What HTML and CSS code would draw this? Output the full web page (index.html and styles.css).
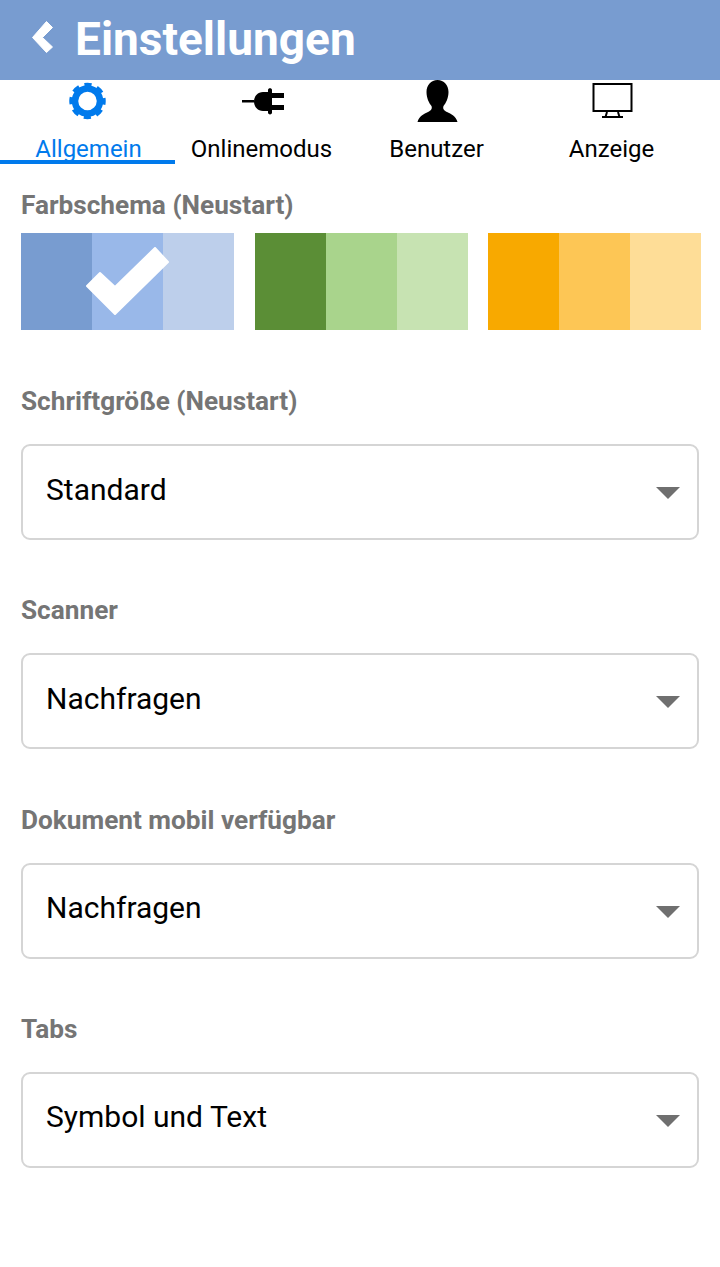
FILE: index.html
```html
<!DOCTYPE html>
<html lang="de">
  <head>
    <meta charset="UTF-8" />
    <title>Einstellungen</title>
    <link rel="stylesheet" href="styles.css">
  </head>
  <body>
    <header class="header">
      <svg class="back" viewBox="0 0 25 34" width="25" height="34">
        <path d="M2.500 17.500 L16.500 1.500 L22.500 7.500 L12.500 17.500 L22.500 27 L16.500 32.500 z" fill="#fff" stroke="#fff" stroke-width="1" stroke-linejoin="round" />
      </svg>
      <h1>Einstellungen</h1>
    </header>

    <nav class="tabs">
      <div class="tab active">
        <svg viewBox="0 0 38 38" width="38" height="38">
          <circle cx="18.500" cy="19" r="12.500" fill="none" stroke="#007aec" stroke-width="6.500" />
          <circle cx="18.500" cy="19" r="16" fill="none" stroke="#007aec" stroke-width="4.500" stroke-dasharray="7 5.566" stroke-dashoffset="3.500" />
        </svg>
        <span>Allgemein</span>
      </div>
      <div class="tab">
        <svg viewBox="0 0 42 38" width="42" height="38">
          <path d="M0 18h12v2.500H0z M12 19.500C12 14 16 10 21 10h5V8c0-2.500 4-2.500 4 0v3h12v5H30v7h12v5H30v2.500c0 2.500-4 2.500-4 0V29h-5c-5 0-9-4-9-9.500z" />
        </svg>
        <span>Onlinemodus</span>
      </div>
      <div class="tab">
        <svg viewBox="0 0 42 38" width="42" height="38">
          <path d="M20.500 -2C27 -2 31.500 3 31.500 10C31.500 16 29 21 26.500 24C25.500 27 27 28.500 30 30C34 32 39 34 40.500 40H0.500C2 34 7 32 11 30C14 28.500 15.500 27 14.500 24C12 21 9.500 16 9.500 10C9.500 3 14 -2 20.500 -2z" />
        </svg>
        <span>Benutzer</span>
      </div>
      <div class="tab">
        <svg viewBox="0 0 42 38" width="42" height="38">
          <rect x="1.500" y="2" width="38" height="27" fill="none" stroke="#000" stroke-width="2" />
          <path d="M15 30l-1.500 5M26 30l1.500 5M10 35h21" fill="none" stroke="#000" stroke-width="2" />
        </svg>
        <span>Anzeige</span>
      </div>
    </nav>

    <main class="content">
      <section class="group group-color">
        <label>Farbschema (Neustart)</label>
        <div class="schemes">
          <div class="scheme">
            <i class="blue1"></i><i class="blue2"></i><i class="blue3"></i>
            <svg class="check" viewBox="0 0 92 76" width="92" height="76">
              <path d="M6 43 L19 30 L34 44 L74 5 L87 19 L34 71 z" fill="#fff" stroke="#fff" stroke-width="2" stroke-linejoin="round" />
            </svg>
          </div>
          <div class="scheme">
            <i class="green1"></i><i class="green2"></i><i class="green3"></i>
          </div>
          <div class="scheme">
            <i class="orange1"></i><i class="orange2"></i><i class="orange3"></i>
          </div>
        </div>
      </section>

      <section class="group">
        <label>Schriftgröße (Neustart)</label>
        <div class="select">Standard</div>
      </section>

      <section class="group">
        <label>Scanner</label>
        <div class="select">Nachfragen</div>
      </section>

      <section class="group">
        <label>Dokument mobil verfügbar</label>
        <div class="select">Nachfragen</div>
      </section>

      <section class="group">
        <label>Tabs</label>
        <div class="select">Symbol und Text</div>
      </section>
    </main>
  </body>
</html>
```

FILE: styles.css
```css
body {
  margin: 0;
  font-family: Roboto, sans-serif;
  background: #fff;
  color: #000;
}

.header {
  height: 80px;
  background-color: #789cd0;
  display: flex;
  align-items: center;
  padding-left: 30px;
  color: #fff;
}

.back {
  margin-right: 20px;
  margin-top: -7px;
}

.header h1 {
  margin: 0;
  font-size: 46px;
  font-weight: 700;
  margin-top: -3px;
}

.tabs {
  display: flex;
  height: 84px;
}

.tab {
  width: 175px;
  height: 84px;
  box-sizing: border-box;
  display: flex;
  flex-direction: column;
  align-items: center;
  padding-top: 2px;
  font-size: 24px;
}

.tab svg {
  overflow: visible;
}

.tab span {
  margin-top: 15px;
  line-height: 28px;
  padding-right: 2px;
}

.tab.active {
  color: #007aec;
  border-bottom: 4px solid #007aec;
}

.tab.active span {
  padding-right: 0;
  padding-left: 2px;
}

.content {
  padding: 27px 21px 0;
}

.group {
  margin-bottom: 56.33px;
}

.group label {
  display: block;
  font-size: 26.2px;
  font-weight: 700;
  color: #757575;
  line-height: 28px;
  margin-bottom: 29px;
}

.group-color {
  margin-bottom: 57px;
}

.group-color label {
  margin-bottom: 14px;
}

.schemes {
  display: flex;
  justify-content: space-between;
  margin-right: -2px;
}

.scheme {
  position: relative;
  display: flex;
  height: 97px;
}

.scheme i {
  display: block;
  width: 71px;
}

.check {
  position: absolute;
  left: 60px;
  top: 10px;
  filter: blur(0.6px);
}

.blue1 { background: #789cd0; }
.blue2 { background: #99b8e9; }
.blue3 { background: #bdcfeb; }
.green1 { background: #5b8e36; }
.green2 { background: #a9d48c; }
.green3 { background: #c7e3b2; }
.orange1 { background: #f8a900; }
.orange2 { background: #fdc655; }
.orange3 { background: #fedd97; }

.select {
  position: relative;
  box-sizing: border-box;
  height: 96px;
  border: 2px solid #d5d5d5;
  border-radius: 9px;
  padding: 0 0 6px 23px;
  display: flex;
  align-items: center;
  font-size: 30px;
}

.select::after {
  content: "";
  position: absolute;
  right: 17px;
  top: 41px;
  border-left: 12px solid transparent;
  border-right: 12px solid transparent;
  border-top: 12px solid #6f6f6f;
}
```
